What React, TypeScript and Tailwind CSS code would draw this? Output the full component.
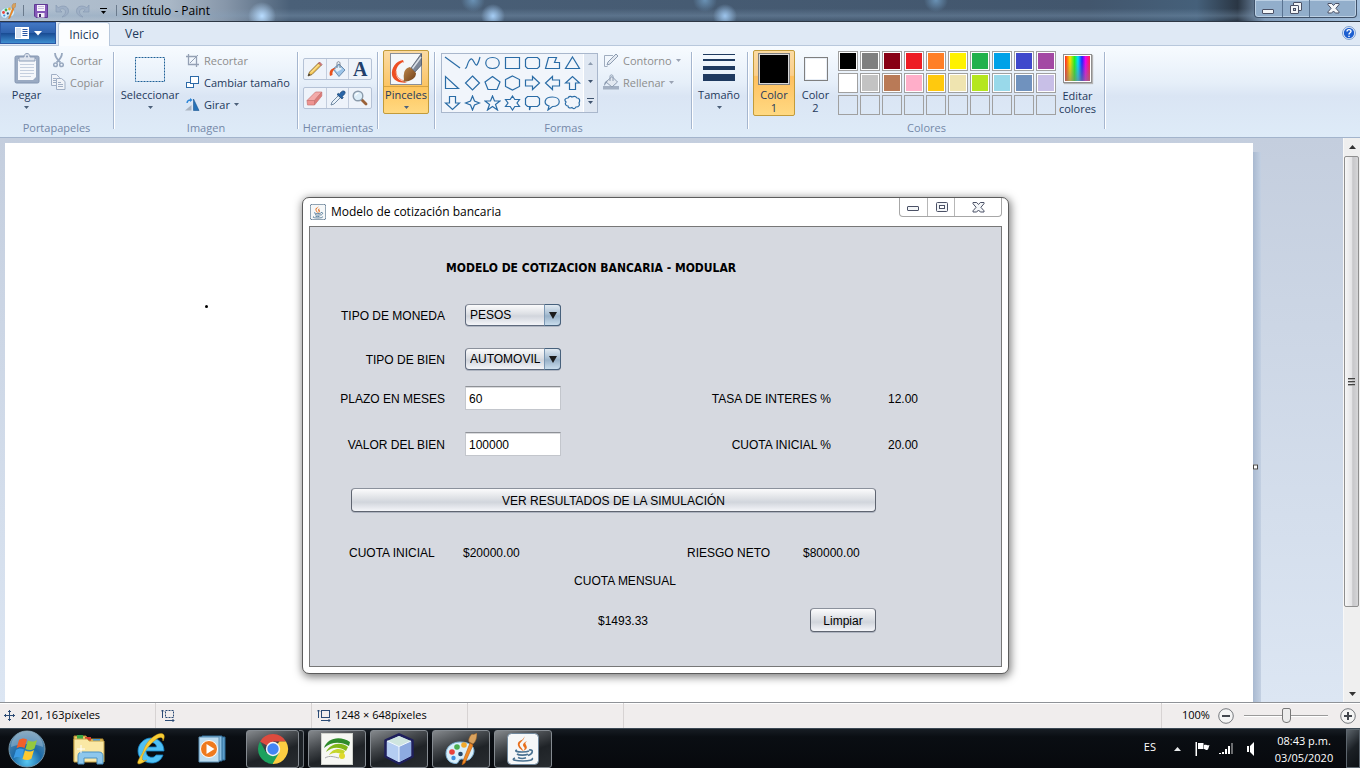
import React, { useState } from "react";

type IconProps = { className?: string };

/* ---------- small shared pieces ---------- */

function Caret({ className = "" }: IconProps) {
  return (
    <svg width="5" height="3" viewBox="0 0 5 3" className={`shrink-0 ${className}`} aria-hidden="true">
      <path d="M0 0h5L2.500 3z" fill="currentColor" />
    </svg>
  );
}

function Separator() {
  return <div className="mt-[6px] h-[77px] w-[2px] shrink-0 border-r border-white bg-[#a5b6cf]" />;
}

function Group({ label, className, children }: { label: string; className: string; children: React.ReactNode }) {
  return (
    <section className={`flex shrink-0 flex-col pt-1 ${className}`}>
      <div className="flex h-[70px] items-start">{children}</div>
      <div className="text-center text-[11px] leading-[16px] text-[#7488a8]">{label}</div>
    </section>
  );
}

function SmallRow({ icon, label, muted, caret }: { icon: React.ReactNode; label: string; muted?: boolean; caret?: boolean }) {
  return (
    <button type="button" className={`flex h-[22px] items-center gap-1 pb-[2px] whitespace-nowrap ${muted ? "text-[#8d8d8d]" : "text-[#1e395b]"}`}>
      <span className="flex w-4 justify-center">{icon}</span>
      {label}
      {caret && <Caret className={muted ? "text-[#9aa3b3]" : "text-[#4c607a]"} />}
    </button>
  );
}

/* ---------- title bar icons ---------- */

function PaletteIcon({ size, className = "" }: { size: number; className?: string }) {
  return (
    <svg width={size} height={size} viewBox="0 0 32 32" className={`shrink-0 ${className}`} aria-hidden="true">
      <path d="M15 9C7 9 1 14 1 20.500c0 6 4 10 10 10 3 0 2-4 5-4.500s5 3 9 0c2-2 4-5 4-8 0-6-6-9-14-9z" fill="#d9effb" stroke="#7fb2d6" />
      <circle cx="7" cy="19" r="2.800" fill="#e8413b" />
      <circle cx="12" cy="14" r="2.800" fill="#4aae4f" />
      <circle cx="19" cy="12" r="2.800" fill="#f2a92c" />
      <circle cx="8.500" cy="25" r="2.200" fill="#3f8fe0" />
      <circle cx="15.500" cy="21" r="2.300" fill="#27486b" />
      <path d="M25 10l3 2-8 18-3 2 1-4z" fill="#f08a24" stroke="#b85c11" strokeWidth=".6" />
      <path d="M24 9c-1-3 1-6 3-8 1 1 3 0 5-1 0 4-1 9-4 11z" fill="#d9a25e" stroke="#94602a" strokeWidth=".6" />
    </svg>
  );
}

function SaveIcon() {
  return (
    <svg width="14" height="14" viewBox="0 0 14 14" aria-hidden="true">
      <path d="M.5.5h13v13H2L.5 12z" fill="#8557b8" stroke="#5f3a93" />
      <path d="M3 1h8v6H3z" fill="#f6f3fb" />
      <path d="M4 2.500h6M4 4.500h6" stroke="#c9bcdf" />
      <path d="M3.500 9h7v4.500h-7z" fill="#f1edf7" />
      <path d="M5 10h2v3H5z" fill="#3c2b63" />
    </svg>
  );
}

function UndoIcon({ flip }: { flip?: boolean }) {
  return (
    <svg width="14" height="14" viewBox="0 0 14 14" className={flip ? "-scale-x-100" : ""} aria-hidden="true">
      <path d="M1 1v7h6L4.800 5.800C7 3.800 10.500 5 10.500 8c0 2-1.500 3.700-3.500 5 4-.8 6.500-3 6.500-6C13.500 2 7.500.5 3.200 3.800z" fill="#9fb0c6" stroke="#8497b0" strokeWidth=".6" />
    </svg>
  );
}

function MinGlyph() {
  return (
    <svg width="13" height="13" viewBox="0 0 13 13" aria-hidden="true">
      <rect x=".5" y="7.500" width="11" height="4" rx=".5" fill="#f4f6f8" stroke="#4b5166" />
    </svg>
  );
}

function MaxGlyph() {
  return (
    <svg width="13" height="11" viewBox="0 0 13 11" aria-hidden="true">
      <rect x="1.500" y=".5" width="11" height="9" rx="1" fill="#f4f6f8" stroke="#4b5166" />
      <rect x="4.500" y="3.500" width="5" height="3" fill="#fff" stroke="#4b5166" />
    </svg>
  );
}

function RestoreGlyph() {
  return (
    <svg width="13" height="13" viewBox="0 0 13 13" aria-hidden="true">
      <rect x="3.500" y=".5" width="8" height="8" rx=".5" fill="#f4f6f8" stroke="#4b5166" />
      <rect x=".5" y="3.500" width="8" height="8" rx=".5" fill="#f4f6f8" stroke="#4b5166" />
      <rect x="3.500" y="6.500" width="2" height="2" fill="#c6d4e3" stroke="#4b5166" />
    </svg>
  );
}

function CloseGlyph() {
  return (
    <svg width="13" height="11" viewBox="0 0 13 11" aria-hidden="true">
      <path d="M1 .5h3.700L6.500 2.500 8.300.5H12v1.200L8.900 5.300 12 8.800V10H8.300L6.500 8 4.700 10H1V8.800l3.100-3.500L1 1.700z" fill="#f4f6f8" stroke="#4b5166" />
    </svg>
  );
}

/* ---------- ribbon icons ---------- */

function ClipboardIcon() {
  return (
    <svg width="26" height="31" viewBox="0 0 26 31" aria-hidden="true">
      <rect x="1" y="3" width="24" height="27" rx="1.500" fill="#9aaac2" stroke="#8496b2" />
      <path d="M4 6h18v18l-3 3H4z" fill="#f5f7fb" />
      <path d="M6 11.500h14M6 14.500h14M6 17.500h14M6 20.500h14M6 23.500h11" stroke="#c5cfdf" />
      <path d="M5 8V4h5c0-2 1-3.500 3-3.500S16 2 16 4h5v4z" fill="#dde3ed" stroke="#8b9cb6" />
      <circle cx="13" cy="3.500" r="1" fill="#8496b2" />
    </svg>
  );
}

function ScissorsIcon() {
  return (
    <svg width="11" height="15" viewBox="0 0 11 15" fill="none" stroke="#98a8bf" aria-hidden="true">
      <path d="M2 0c0 3 1.500 6 5.500 9.500M9 0c0 3-1.500 6-5.500 9.500" strokeWidth="1.800" />
      <circle cx="2.500" cy="11.800" r="1.800" strokeWidth="1.500" />
      <circle cx="8.500" cy="11.800" r="1.800" strokeWidth="1.500" />
    </svg>
  );
}

function CopyIcon() {
  return (
    <svg width="16" height="16" viewBox="0 0 16 16" fill="#f0f3f8" stroke="#a0afc5" aria-hidden="true">
      <path d="M1.500.5h5l3 3v8h-8z" />
      <path d="M3 4.500h3M3 6.500h4M3 8.500h4" />
      <path d="M6.500 4.500h5l3.500 3v8H6.500z" />
      <path d="M8 8.500h3M8 10.500h5M8 12.500h5" />
    </svg>
  );
}

function CropIcon() {
  return (
    <svg width="13" height="13" viewBox="0 0 13 13" fill="none" stroke="#94a0b4" aria-hidden="true">
      <path d="M2.500 0v10.500H13M0 2.500h10.500V13" strokeWidth="1.300" />
      <path d="M4 9L12 1" />
    </svg>
  );
}

function ResizeIcon() {
  return (
    <svg width="13" height="13" viewBox="0 0 13 13" aria-hidden="true">
      <rect x=".5" y="6.500" width="7" height="5" fill="#fff" stroke="#2c6aa8" />
      <rect x="4.500" y=".5" width="8" height="7" fill="#fff" stroke="#2c6aa8" />
    </svg>
  );
}

function RotateIcon() {
  return (
    <svg width="15" height="13" viewBox="0 0 15 13" aria-hidden="true">
      <path d="M0 12.500L6.500 7v5.500z" fill="#a9b3c0" />
      <path d="M8.500 1v11.500H14z" fill="#2672b8" stroke="#1a5691" strokeWidth=".6" />
      <path d="M2 5c.2-2 1.500-3 3.500-3" fill="none" stroke="#2b85d8" strokeWidth="1.300" />
      <path d="M5 0l2.500 2L5 4z" fill="#2b85d8" />
    </svg>
  );
}

function PencilIcon() {
  return (
    <svg width="16" height="16" viewBox="0 0 16 16" aria-hidden="true">
      <path d="M1 15l1.500-4L11.500 2l2.500 2.500-9 9z" fill="#f4c654" stroke="#7b6131" strokeWidth=".8" />
      <path d="M11.500 2l1-1 2.500 2.500-1 1z" fill="#e78383" stroke="#9b4d4d" strokeWidth=".7" />
      <path d="M1 15l.8-2.500 1.800 1.600z" fill="#333" />
      <path d="M4 11.500L12 3.500" stroke="#fff0b8" />
    </svg>
  );
}

function BucketIcon() {
  return (
    <svg width="17" height="16" viewBox="0 0 17 16" aria-hidden="true">
      <path d="M4 8l6-5 6 6-6 6.500z" fill="#9cc4e8" stroke="#54789e" strokeWidth=".8" />
      <path d="M6 8l4-3 3 3-5 3z" fill="#e4f1fb" />
      <path d="M1 15c-1-4 0-8 6-8-3 2-4 4-3.500 7z" fill="#e8521d" />
      <path d="M8 7V2.500C8 0 11 0 11 2.500V7" fill="none" stroke="#7d8795" />
    </svg>
  );
}

function EraserIcon() {
  return (
    <svg width="17" height="15" viewBox="0 0 17 15" aria-hidden="true">
      <path d="M1 9.500L9.500 1h6.300L8.500 9.500z" fill="#f3aaa9" stroke="#c97573" strokeWidth=".7" />
      <path d="M1 9.500h7.500V14H1.500z" fill="#ee9390" stroke="#c97573" strokeWidth=".7" />
      <path d="M8.500 9.500L15.800 1v4L8.500 14z" fill="#dd7b78" stroke="#c97573" strokeWidth=".7" />
    </svg>
  );
}

function DropperIcon() {
  return (
    <svg width="16" height="16" viewBox="0 0 16 16" aria-hidden="true">
      <path d="M1 15l1-3 6.500-6.500 2 2L4 14z" fill="#eaf3fa" stroke="#67809b" strokeWidth=".9" />
      <path d="M7 4.500l1.300-1.200 1 1C10.500 2.500 12 .5 14 1c2 .8 1.400 3-1.800 5.500l1 1L12 9z" fill="#2a66a8" stroke="#17406f" strokeWidth=".7" />
    </svg>
  );
}

function MagnifierIcon() {
  return (
    <svg width="16" height="16" viewBox="0 0 16 16" aria-hidden="true">
      <path d="M9.500 9.500l4.500 4.500" stroke="#9a6238" strokeWidth="2.800" strokeLinecap="round" />
      <circle cx="6" cy="6" r="4.800" fill="#dcedf8" stroke="#8b9bab" strokeWidth="1.400" />
      <path d="M3.500 5.500C4 3.800 5.200 3.200 6.500 3.200" stroke="#fff" fill="none" strokeWidth="1.200" />
    </svg>
  );
}

function BrushesIcon() {
  return (
    <svg width="32" height="32" viewBox="0 0 32 32" aria-hidden="true">
      <defs>
        <linearGradient id="bristle" x1="0" y1="0" x2="1" y2="1">
          <stop offset="0" stopColor="#c08a4e" />
          <stop offset="1" stopColor="#6d3e17" />
        </linearGradient>
      </defs>
      <rect x=".5" y=".5" width="31" height="31" fill="#f3f7fa" stroke="#8a9098" />
      <path d="M13 7C6 8 1 15 2 22c1 6 9 8.500 15 7.500-6-1-11-4-11-9.500 0-6 3-9 7-11l1 1z" fill="#ee4f23" />
      <path d="M6 18c0 6 4 9 9 10" fill="none" stroke="#f98e6b" />
      <path d="M21 15L31 1h.5v11L25 19z" fill="#7c8798" stroke="#475061" strokeWidth=".7" />
      <path d="M22.500 15.500L31 4" stroke="#dbe2ea" strokeWidth="1.500" />
      <path d="M20 14l6 6c0 5-4 8-13 9 2-2 0-5 1-8 0-3 2-6 6-7z" fill="url(#bristle)" />
    </svg>
  );
}

function OutlineIcon() {
  return (
    <svg width="16" height="15" viewBox="0 0 16 15" aria-hidden="true">
      <path d="M10 2.500H1.500v11h3" fill="none" stroke="#a0adbf" />
      <path d="M4 12l1-3 8-8 2 2-8 8z" fill="#e3e9f1" stroke="#8d9cb1" />
    </svg>
  );
}

function FillIcon() {
  return (
    <svg width="16" height="16" viewBox="0 0 16 16" aria-hidden="true">
      <path d="M0 12h16v3.500H0z" fill="#a3b0c3" />
      <path d="M3 8l6-5.500L14.500 8 9 13z" fill="#e3e9f1" stroke="#8d9cb1" />
      <path d="M7 7V2.500C7 .3 10 .3 10 2.500V7" fill="none" stroke="#8d9cb1" />
      <path d="M1 12c0-3 1-5 4-6L3.500 9z" fill="#8d9cb1" />
    </svg>
  );
}

const shapePaths: string[] = [
  "M1 2l15 11",
  "M1 13C3 14 3 9 5 6s3-3 5 1 3 6 6-5",
  "M8.500 2.500c9 0 9 11 0 11s-9-11 0-11z",
  "M1.500 2.500h14v11h-14z",
  "M3.500 2.500h10l2 2v7l-2 2h-10l-2-2v-7z",
  "M4.500 2.500h8l-2 5h5v6h-14z",
  "M8.500 2L15.500 13.500h-14z",
  "M1.500 1.500v12h13z",
  "M8.500 1L15.500 8l-7 7-7-7z",
  "M8.500 1.500l7.500 5.500-3 7.500H4L1 7z",
  "M8.500 1l7 3.500v7l-7 3.500-7-3.500v-7z",
  "M1.500 5v6h7v3.500L15.500 8l-7-6.500V5z",
  "M15.500 5v6h-7v3.500L1.500 8l7-6.500V5z",
  "M5.500 14.500h6V8h4L8.500 1.500 1.500 8h4z",
  "M5.500 1.500h6V8h4l-7 6.500L1.500 8h4z",
  "M8.500 1l2 5 5 2-5 2-2 5-2-5-5-2 5-2z",
  "M8.500 1l2 5h5.500l-4.500 3.500 2 5.500-5-3.500-5 3.500 2-5.500L1 6h5.500z",
  "M8.500 1l2.300 3.500H15.500L13 8l2.500 3.500h-4.700L8.500 15l-2.300-3.500H1.500L4 8 1.500 4.500h4.700z",
  "M3.500 1.500h10l2 2v6l-2 2h-7L5.500 15v-3.500h-2l-2-2v-6z",
  "M8.500 2c9 0 9 9.500 0 9.500L4 15l1-4C-1 9 0 2 8.500 2z",
  "M4 3c1-2 3-2 4-1 2-1 4-.5 5 1 3 0 3 3 2 5 1 2 0 4-3 4-1 2-3 2-4 .5-2 1-4 .5-4-1.500-3 0-3-3-2-4-2-2-1-4 2-4z",
];

function ShapeGallery() {
  return (
    <div className="flex h-[60px] w-[157px] border border-[#a9b7cc] bg-[#f1f5fb]">
      <div className="grid flex-1 grid-cols-7 content-between">
        {shapePaths.map((d, i) => (
          <button key={i} type="button" aria-label={`Forma ${i + 1}`} className="flex h-[18px] items-center justify-center">
            <svg width="17" height="16" viewBox="0 0 17 16" fill="none" stroke="#2a6ca6" strokeWidth="1.200" aria-hidden="true">
              <path d={d} />
            </svg>
          </button>
        ))}
      </div>
      <div className="flex w-[14px] flex-col items-center justify-around border-l border-white bg-[#dfe7f2] text-[#3f546f]">
        <Caret className="rotate-180 opacity-50" />
        <Caret />
        <span className="flex flex-col items-center gap-[2px]">
          <span className="h-px w-[7px] bg-[#3f546f]" />
          <Caret />
        </span>
      </div>
    </div>
  );
}

const palette: (string | null)[] = [
  "#000000", "#7f7f7f", "#880015", "#ed1c24", "#ff7f27", "#fff200", "#22b14c", "#00a2e8", "#3f48cc", "#a349a4",
  "#ffffff", "#c3c3c3", "#b97a57", "#ffaec9", "#ffc90e", "#efe4b0", "#b5e61d", "#99d9ea", "#7092be", "#c8bfe7",
  null, null, null, null, null, null, null, null, null, null,
];

/* ---------- Paint chrome ---------- */

function TitleBar() {
  return (
    <header
      className="flex h-[22px] shrink-0 items-start border-b border-[#2d3744] bg-[radial-gradient(circle_at_262px_16px,#b8dcff_0,transparent_14px),radial-gradient(circle_at_493px_16px,#a5cdf5_0,transparent_12px),radial-gradient(circle_at_725px_16px,#9cc4ec_0,transparent_12px),radial-gradient(circle_at_473px_0px,#6a92b5_0,transparent_12px),radial-gradient(circle_at_705px_0px,#6a92b5_0,transparent_12px),radial-gradient(circle_at_936px_0px,#6a92b5_0,transparent_12px),linear-gradient(to_bottom,transparent_40%,#86a2bd55_75%,transparent),linear-gradient(to_right,#b4c3d3_0,#a9b7c6_170px,#8797aa_225px,#4a6078_290px,#42566d_80%,#45607a_88%,#2a3644_91%,#7f9ab8_93%,#a3bfdd_100%)]"
    >
      <div className="flex h-[21px] flex-1 items-center">
        <PaletteIcon size={16} />
        <span className="ml-[7px] h-[11px] w-px bg-[#6a7a8c]" />
        <div className="ml-[10px] flex items-center gap-[7px]">
          <button type="button" aria-label="Guardar"><SaveIcon /></button>
          <button type="button" aria-label="Deshacer"><UndoIcon /></button>
          <button type="button" aria-label="Rehacer"><UndoIcon flip /></button>
          <button type="button" aria-label="Personalizar" className="flex flex-col items-center gap-[2px] pl-[3px] text-black">
            <span className="h-px w-[7px] bg-black" />
            <Caret />
          </button>
        </div>
        <span className="ml-[9px] h-[11px] w-px bg-[#6a7a8c]" />
        <h1 className="ml-[5px] text-[12px] text-black">Sin título - Paint</h1>
      </div>
      <div className="mr-[3px] flex h-[18px] rounded-b-[4px] border border-t-0 border-[#3f5169] bg-[#92aecb] shadow-[inset_0_0_0_1px_#bcd0e4]">
        <button type="button" aria-label="Minimizar" className="flex w-[28px] items-center justify-center border-r border-[#5a7391]"><MinGlyph /></button>
        <button type="button" aria-label="Restaurar" className="flex w-[27px] items-center justify-center border-r border-[#5a7391]"><RestoreGlyph /></button>
        <button type="button" aria-label="Cerrar" className="flex w-[46px] items-center justify-center"><CloseGlyph /></button>
      </div>
    </header>
  );
}

function TabRow() {
  return (
    <nav className="flex h-6 shrink-0 items-end border-b border-[#b8c8dc] bg-[#dfe9f5] text-[12px] text-[#1e395b]">
      <button
        type="button"
        aria-label="Menú de Paint"
        className="mb-px flex h-[22px] w-14 items-center justify-center gap-[5px] border border-[#2b58a4] bg-[linear-gradient(#4378c4,#2f62ae_48%,#184a92_50%,#3f8fd0)] text-white"
      >
        <svg width="14" height="12" viewBox="0 0 14 12" aria-hidden="true">
          <rect width="14" height="12" fill="#fff" />
          <rect x="1" y="1" width="5" height="10" fill="#d6e2f1" />
          <path d="M7.500 2.500h5M7.500 4.500h5M7.500 6.500h5M7.500 8.500h5" stroke="#2b58a4" />
        </svg>
        <svg width="8" height="5" viewBox="0 0 8 5" aria-hidden="true"><path d="M0 0h8L4 4.500z" fill="#fff" /></svg>
      </button>
      <button type="button" className="-mb-px ml-[2px] h-[24px] w-[52px] rounded-t-[3px] border border-b-0 border-[#b8c8dc] bg-[#fbfdff]">Inicio</button>
      <button type="button" className="h-[22px] w-[49px]">Ver</button>
      <button type="button" aria-label="Ayuda" className="mr-1 mb-[5px] ml-auto">
        <svg width="14" height="14" viewBox="0 0 14 14" aria-hidden="true">
          <circle cx="7" cy="7" r="6.400" fill="#fff" stroke="#6b93cc" />
          <circle cx="7" cy="7" r="5.200" fill="#1d5fd0" />
          <path d="M5 5.500C5 3 9 3 9 5.300 9 6.800 7 6.700 7 8.500M7 9.700v1.400" fill="none" stroke="#fff" strokeWidth="1.400" />
        </svg>
      </button>
    </nav>
  );
}

function Ribbon() {
  return (
    <div className="flex h-[92px] shrink-0 overflow-hidden border-b border-[#a3b4cc] bg-[linear-gradient(#f7fbff,#e6eff9_40%,#dae5f4_55%,#deebf8)] text-[11px] leading-[13px] text-[#1e395b]">
      <Group label="Portapapeles" className="w-[113px]">
        <button type="button" className="flex w-[53px] flex-col items-center pt-[3px]">
          <ClipboardIcon />
          <span className="pt-[4px]">Pegar</span>
          <Caret className="mt-[5px] text-[#4c607a]" />
        </button>
        <div className="-ml-[3px] flex flex-col">
          <SmallRow muted icon={<ScissorsIcon />} label="Cortar" />
          <SmallRow muted icon={<CopyIcon />} label="Copiar" />
        </div>
      </Group>
      <Separator />
      <Group label="Imagen" className="w-[182px]">
        <button type="button" className="flex w-[70px] flex-col items-center pt-[7px]">
          <svg width="32" height="26" viewBox="0 0 32 26" aria-hidden="true">
            <rect x="1.500" y=".5" width="29" height="24" fill="none" stroke="#1f6096" strokeDasharray="2 1" />
          </svg>
          <span className="pt-[5px]">Seleccionar</span>
          <Caret className="mt-[5px] text-[#4c607a]" />
        </button>
        <div className="-ml-px flex flex-col">
          <SmallRow muted icon={<CropIcon />} label="Recortar" />
          <SmallRow icon={<ResizeIcon />} label="Cambiar tamaño" />
          <SmallRow caret icon={<RotateIcon />} label="Girar" />
        </div>
      </Group>
      <Separator />
      <Group label="Herramientas" className="w-[78px]">
        <div className="flex flex-col gap-[7px] pt-2 pl-1">
          <div className="flex h-[22px] w-[69px] divide-x divide-[#c3cddd] rounded-[2px] border border-[#b5c2d6] bg-[#eef3fa]">
            <button type="button" aria-label="Lápiz" className="flex flex-1 items-center justify-center"><PencilIcon /></button>
            <button type="button" aria-label="Relleno" className="flex flex-1 items-center justify-center"><BucketIcon /></button>
            <button type="button" aria-label="Texto" className="flex flex-1 items-center justify-center font-['Liberation_Serif',serif] text-[20px] font-bold text-[#22406b]">A</button>
          </div>
          <div className="flex h-[22px] w-[69px] divide-x divide-[#c3cddd] rounded-[2px] border border-[#b5c2d6] bg-[#eef3fa]">
            <button type="button" aria-label="Borrador" className="flex flex-1 items-center justify-center"><EraserIcon /></button>
            <button type="button" aria-label="Selector de color" className="flex flex-1 items-center justify-center"><DropperIcon /></button>
            <button type="button" aria-label="Lupa" className="flex flex-1 items-center justify-center"><MagnifierIcon /></button>
          </div>
        </div>
      </Group>
      <Separator />
      <div className="w-[55px] shrink-0 pt-1 pl-1">
        <button
          type="button"
          className="flex h-[64px] w-[46px] flex-col items-center rounded-[2px] border border-[#c29b3b] bg-[linear-gradient(#fbdba4,#fbc566_55%,#fec55d_56%,#ffd982)] pt-[2px]"
        >
          <BrushesIcon />
          <span className="mt-px w-full border-t border-[#d9a441] pt-px">Pinceles</span>
          <Caret className="mt-[5px] text-[#4c607a]" />
        </button>
      </div>
      <Separator />
      <Group label="Formas" className="w-[255px]">
        <div className="pt-[3px] pl-[5px]"><ShapeGallery /></div>
        <div className="flex flex-col pl-[5px]">
          <SmallRow muted caret icon={<OutlineIcon />} label="Contorno" />
          <SmallRow muted caret icon={<FillIcon />} label="Rellenar" />
        </div>
      </Group>
      <Separator />
      <div className="w-[54px] shrink-0 pt-2">
        <button type="button" className="flex w-[52px] flex-col items-center">
          <svg width="32" height="28" viewBox="0 0 32 28" fill="#1f3a60" aria-hidden="true">
            <path d="M0 0h32v1H0zM0 5h32v2H0zM0 12h32v4H0zM0 20h32v7H0z" />
          </svg>
          <span className="pt-[6px]">Tamaño</span>
          <Caret className="mt-[5px] text-[#4c607a]" />
        </button>
      </div>
      <Separator />
      <Group label="Colores" className="w-[355px]">
        <button
          type="button"
          className="ml-1 flex h-[66px] w-[42px] flex-col items-center rounded-[2px] border border-[#c29b3b] bg-[linear-gradient(#fbdba4,#fbcf8c_38%,#fec060_40%,#ffd982)] pt-[2px]"
        >
          <span className="mb-[3px] size-8 border border-[#7f7f7f] bg-black shadow-[inset_0_0_0_1px_#d8d8d8]" />
          <span>Color<br />1</span>
        </button>
        <button type="button" className="flex h-[66px] w-[41px] flex-col items-center pt-[7px]">
          <span className="mb-[7px] size-6 border border-[#7f7f7f] bg-white shadow-[inset_0_0_0_1px_#e8eef6]" />
          <span>Color<br />2</span>
        </button>
        <div className="grid grid-cols-10 gap-[2px] pt-px pl-[2px]">
          {palette.map((c, i) => (
            <button
              key={i}
              type="button"
              aria-label={`Color de paleta ${i + 1}`}
              className={`size-5 border border-[#a0a0a0] p-px ${c ? "bg-white" : "bg-transparent"}`}
            >
              <span className="block size-full" style={{ backgroundColor: c ?? "transparent" }} />
            </button>
          ))}
        </div>
        <button type="button" className="flex w-[43px] flex-col items-center pt-1">
          <span className="mb-[6px] block size-[29px] border border-[#8f8f8f] bg-white p-px shadow-[1px_1px_1px_#b5b5b5]">
            <span className="block size-full bg-[linear-gradient(to_bottom,transparent_20%,#80808099),linear-gradient(to_right,#f22,#fd0_20%,#2e2_38%,#0df_52%,#22f_68%,#e0e_82%,#f24)]" />
          </span>
          <span>Editar<br />colores</span>
        </button>
      </Group>
      <Separator />
    </div>
  );
}

function ScrollBar() {
  return (
    <div className="flex w-[17px] shrink-0 flex-col items-start border-l border-[#f8f8f8] bg-[#efefef]">
      <button type="button" aria-label="Subir" className="flex h-[18px] w-full shrink-0 items-center justify-center">
        <svg width="7" height="4" viewBox="0 0 7 4" aria-hidden="true"><path d="M0 4h7L3.500 0z" fill="#333" /></svg>
      </button>
      <div className="flex w-[15px] grow-[451] basis-0 flex-col items-center justify-center gap-px rounded-[2px] border border-[#8f8f8f] bg-[linear-gradient(to_right,#f7f7f7,#e4e4e6_50%,#c7c7ca_60%,#d6d6d8)]">
        <span className="h-[2px] w-[7px] border-t border-[#444] bg-[#aaa]" />
        <span className="h-[2px] w-[7px] border-t border-[#444] bg-[#aaa]" />
        <span className="h-[2px] w-[7px] border-t border-[#444] bg-[#aaa]" />
      </div>
      <div className="grow-[78] basis-0" />
      <button type="button" aria-label="Bajar" className="flex h-[17px] w-full shrink-0 items-center justify-center">
        <svg width="7" height="4" viewBox="0 0 7 4" aria-hidden="true"><path d="M0 0h7L3.500 4z" fill="#333" /></svg>
      </button>
    </div>
  );
}

function MoveIcon() {
  return (
    <svg width="11" height="11" viewBox="0 0 11 11" fill="none" stroke="#2a4a75" aria-hidden="true">
      <path d="M5.500 0v11M0 5.500h11M4 2l1.500-1.500L7 2M4 9l1.500 1.500L7 9M2 4L.5 5.500 2 7M9 4l1.500 1.500L9 7" />
    </svg>
  );
}

function SizeIcon({ dashed }: { dashed?: boolean }) {
  return (
    <svg width="14" height="13" viewBox="0 0 14 13" fill="none" stroke="#2a4a75" aria-hidden="true">
      <rect x="4.500" y="1.500" width="8" height="7" strokeDasharray={dashed ? "2 1" : undefined} />
      <path d="M1.500 1v8M0 2.500L1.500 1 3 2.500M4 11.500h9M11.500 10l1.500 1.500-1.500 1.500" />
    </svg>
  );
}

function StatusBar() {
  return (
    <footer className="flex h-[26px] shrink-0 items-stretch border-t border-[#8f9297] bg-[#f0eded] text-[11px] text-black shadow-[inset_0_1px_0_#fff]">
      <div className="flex w-[156px] items-center gap-[6px] border-r border-[#d7d3d3] pl-1"><MoveIcon />201, 163píxeles</div>
      <div className="flex w-[156px] items-center border-r border-[#d7d3d3] pl-[5px]"><SizeIcon dashed /></div>
      <div className="flex w-[156px] items-center gap-1 border-r border-[#d7d3d3] pl-[5px]"><SizeIcon />1248 × 648píxeles</div>
      <div className="w-[156px] border-r border-[#d7d3d3]" />
      <div className="ml-auto flex items-center border-l border-[#d7d3d3] pr-[4px] pl-5">
        <span className="w-9">100%</span>
        <button type="button" aria-label="Alejar">
          <svg width="16" height="16" viewBox="0 0 16 16" aria-hidden="true">
            <circle cx="8" cy="8" r="7.300" fill="#f4f4f4" stroke="#76797e" />
            <path d="M4 8h8" stroke="#43474e" strokeWidth="2" />
          </svg>
        </button>
        <input
          type="range"
          aria-label="Zoom"
          defaultValue={50}
          className="mr-3 ml-[10px] h-4 w-[84px] appearance-none bg-transparent [&::-webkit-slider-runnable-track]:h-[2px] [&::-webkit-slider-runnable-track]:border-t [&::-webkit-slider-runnable-track]:border-[#9a9a9a] [&::-webkit-slider-runnable-track]:bg-white [&::-webkit-slider-thumb]:-mt-2 [&::-webkit-slider-thumb]:h-[15px] [&::-webkit-slider-thumb]:w-[9px] [&::-webkit-slider-thumb]:appearance-none [&::-webkit-slider-thumb]:rounded-t-[2px] [&::-webkit-slider-thumb]:rounded-b-[4px] [&::-webkit-slider-thumb]:border [&::-webkit-slider-thumb]:border-[#777] [&::-webkit-slider-thumb]:bg-[#ececec]"
        />
        <button type="button" aria-label="Acercar">
          <svg width="16" height="16" viewBox="0 0 16 16" aria-hidden="true">
            <circle cx="8" cy="8" r="7.300" fill="#f4f4f4" stroke="#76797e" />
            <path d="M4 8h8M8 4v8" stroke="#43474e" strokeWidth="2" />
          </svg>
        </button>
      </div>
    </footer>
  );
}

/* ---------- Java dialog ---------- */

function JavaIcon({ size }: { size: number }) {
  return (
    <svg width={size} height={size} viewBox="0 0 32 32" className="shrink-0" aria-hidden="true">
      <rect x=".5" y=".5" width="31" height="31" rx="4" fill="#f5f7f8" stroke="#6f879c" strokeWidth={size < 20 ? 2 : 1} />
      <path d="M17 3c2 4-6 6-4 10 1 2 3 3 3 5-3-2-6-5-5-8S18 7 17 3z" fill="#e76f1c" />
      <path d="M20 8c-4 2-5 4-3 6 1 1 1 2-1 4 5-2 4-4 3-6s-1-2 1-4z" fill="#e76f1c" />
      <g fill="none" stroke="#4a7291" strokeWidth="1.700">
        <path d="M10 17c-3 1 0 2 5 2s7-1 7-1M10 21c2 1.500 8 1.500 11 .3M11 24.500c2 1 6 1 8 .3M22 17c5-1 4 4-1 5.500" />
        <path d="M8 25c-5 2 2 3 8 3s11-1 9-3" />
      </g>
    </svg>
  );
}

function ComboBox({ id, options }: { id: string; options: string[] }) {
  return (
    <div className="relative mt-px h-[22px] w-24">
      <select
        id={id}
        className="block size-full appearance-none rounded-[4px] border border-[#5f6a7d] border-t-[#8b919c] bg-[linear-gradient(#fbfbfc,#dcdfe4_45%,#d1d5dc_55%,#f4f5f9)] pb-px pl-1 leading-[18px] text-black shadow-[0_1px_0_#aeb4c0]"
      >
        {options.map((o) => (
          <option key={o}>{o}</option>
        ))}
      </select>
      <span className="pointer-events-none absolute inset-y-0 right-0 flex w-[17px] items-center justify-center rounded-r-[4px] border border-[#47617c] border-l-[#7b97b3] bg-[linear-gradient(#e1eaf2,#a9bfd3_45%,#98b1c8_55%,#c9dded)]">
        <svg width="8" height="7" viewBox="0 0 8 7" aria-hidden="true"><path d="M0 0h8L4 7z" fill="#1c1c1c" /></svg>
      </span>
    </div>
  );
}

const swingButton =
  "h-6 rounded-[4px] border border-[#5f6571] border-t-[#8b919c] bg-[linear-gradient(#fbfbfc,#dcdfe4_45%,#d1d5dc_60%,#f4f5f9)] pt-[2px] leading-5 text-black shadow-[0_1px_0_#aeb4c0]";
const swingField = "h-6 w-24 border border-[#c3c6cc] border-t-[#8d9096] bg-white pt-[2px] pl-[3px] text-black shadow-[inset_0_1px_0_#d9dadd]";
const formRow = "grid h-6 grid-cols-[135px_96px_1fr_67px] gap-x-5 leading-[26px]";

function QuoteDialog() {
  const [months, setMonths] = useState("60");
  const [value, setValue] = useState("100000");
  return (
    <section
      aria-label="Modelo de cotización bancaria"
      className="absolute top-[54px] left-[297px] flex w-[707px] flex-col rounded-[7px] border border-[#5c5c5c] bg-white px-[6px] pb-[6px] shadow-[1px_2px_9px_1px_#00000080]"
    >
      <header className="flex h-[28px] items-start">
        <div className="flex flex-1 items-center gap-[5px] pt-[6px] pl-px">
          <JavaIcon size={16} />
          <h2 className="text-[12px] leading-[16px] text-black">Modelo de cotización bancaria</h2>
        </div>
        <div className="flex h-[19px] rounded-b-[4px] border border-t-0 border-[#a7a7a7]">
          <button type="button" aria-label="Minimizar diálogo" className="flex w-7 justify-center border-r border-[#b7b7b7] pt-px"><MinGlyph /></button>
          <button type="button" aria-label="Maximizar diálogo" className="flex w-[27px] items-center justify-center border-r border-[#b7b7b7]"><MaxGlyph /></button>
          <button type="button" aria-label="Cerrar diálogo" className="flex w-[46px] items-center justify-center"><CloseGlyph /></button>
        </div>
      </header>
      <form
        onSubmit={(e) => e.preventDefault()}
        className="flex flex-col border border-[#777] bg-[#d6d9e0] pt-[29px] pr-[83px] pb-[34px] font-['Liberation_Sans',sans-serif] text-[12px] leading-6 text-black"
      >
        <h3 className="pl-[136px] font-['DejaVu_Sans_Condensed','Open_Sans',sans-serif] font-bold">MODELO DE COTIZACION BANCARIA - MODULAR</h3>
        <div className={`mt-[23px] ${formRow}`}>
          <label htmlFor="moneda" className="text-right">TIPO DE MONEDA</label>
          <ComboBox id="moneda" options={["PESOS", "DOLARES"]} />
        </div>
        <div className={`mt-5 ${formRow}`}>
          <label htmlFor="bien" className="text-right">TIPO DE BIEN</label>
          <ComboBox id="bien" options={["AUTOMOVIL", "CASA"]} />
        </div>
        <div className={`mt-[15px] ${formRow}`}>
          <label htmlFor="plazo" className="text-right">PLAZO EN MESES</label>
          <input id="plazo" value={months} onChange={(e) => setMonths(e.target.value)} className={swingField} />
          <span className="text-right">TASA DE INTERES %</span>
          <output className="text-right">12.00</output>
        </div>
        <div className={`mt-[22px] ${formRow}`}>
          <label htmlFor="valor" className="text-right">VALOR DEL BIEN</label>
          <input id="valor" value={value} onChange={(e) => setValue(e.target.value)} className={swingField} />
          <span className="text-right">CUOTA INICIAL %</span>
          <output className="text-right">20.00</output>
        </div>
        <button type="submit" className={`mt-8 mr-[42px] ml-[41px] ${swingButton}`}>VER RESULTADOS DE LA SIMULACIÓN</button>
        <div className="mt-7 grid h-6 grid-cols-[114px_1fr_116px_115px] pl-[39px] leading-[26px]">
          <span>CUOTA INICIAL</span>
          <output>$20000.00</output>
          <span>RIESGO NETO</span>
          <output>$80000.00</output>
        </div>
        <div className="mt-1 h-6 pr-[42px] pl-[64px] text-center leading-[26px]">CUOTA MENSUAL</div>
        <div className="mt-4 grid h-6 grid-cols-[1fr_66px] pr-[42px] pl-[126px] leading-[26px]">
          <output className="text-center">$1493.33</output>
          <button type="button" className={swingButton}>Limpiar</button>
        </div>
      </form>
    </section>
  );
}

/* ---------- taskbar ---------- */

function StartOrb() {
  return (
    <svg width="38" height="38" viewBox="0 0 38 38" aria-hidden="true">
      <defs>
        <radialGradient id="orb" cx=".5" cy=".85" r=".9">
          <stop offset="0" stopColor="#59c8f2" />
          <stop offset=".45" stopColor="#1d6ba8" />
          <stop offset="1" stopColor="#6d93ae" />
        </radialGradient>
      </defs>
      <circle cx="19" cy="19" r="18" fill="url(#orb)" stroke="#7597ab" />
      <path d="M3 17a16 16 0 0132 0c-9-4-22-4-32 0z" fill="#fff" opacity=".25" />
      <path d="M11 10c3-2 5-2 8-.5L16.500 18c-3-1.500-5-1.500-8 .3z" fill="#f0602a" />
      <path d="M20 10.500c3 1.500 6 1.500 9-.5L26.500 18.500c-3 2-6 2-9 .5z" fill="#95c83e" />
      <path d="M8 20c3-2 5-2 8-.5L13.500 28c-3-1.500-5-1.500-8 .3z" fill="#3b9be4" />
      <path d="M17 20.500c3 1.500 6 1.500 9-.5L23.500 28.500c-3 2-6 2-9 .5z" fill="#fcc92f" />
    </svg>
  );
}

function ExplorerIcon() {
  return (
    <svg width="34" height="32" viewBox="0 0 34 32" aria-hidden="true">
      <path d="M2 3h12l2 3h15v22H2z" fill="#e9c766" stroke="#b18c2f" />
      <path d="M5 2h6v5H5z" fill="#3aa545" /><path d="M13 4h6v5h-6z" fill="#d43f2c" /><path d="M21 6h7v4h-7z" fill="#4797d6" />
      <path d="M2 6h13l2 2h15v21H2z" fill="#fae8a5" stroke="#c6a449" />
      <path d="M6 31v-8c0-3 2-4 4-4h17c3 0 4 2 4 4v8h-6v-6H12v6z" fill="#8dc7ec" stroke="#4b91c2" />
      <path d="M9 12v8M5 16h8" stroke="#fff" />
    </svg>
  );
}

function IeIcon() {
  return (
    <svg width="32" height="32" viewBox="0 0 32 32" aria-hidden="true">
      <path d="M29 18H11c0 7 8 8 10 4h7c-2 6-7 8-11 8C9 30 3 25 3 18S9 5 16 5s13 5 13 13zM11 14h10.500c0-6-10.500-6-10.500 0z" fill="#4fc0f4" stroke="#1584c8" strokeWidth=".8" />
      <path d="M7 21C-1 33 3 33 12 27 4 30 7 21 14 13S28 1 28 8c4-8-2-10-10-4S9 17 7 21z" fill="#f8cd35" stroke="#c99512" strokeWidth=".5" />
    </svg>
  );
}

function MediaIcon() {
  return (
    <svg width="28" height="28" viewBox="0 0 28 28" aria-hidden="true">
      <path d="M8 2h19v23H8z" fill="#5d9dc9" stroke="#2f6c99" />
      <path d="M4 1h20v25H4z" fill="#8dc1e3" stroke="#2f6c99" />
      <path d="M1 2h20v25H1z" fill="#bcdcf0" stroke="#5b8eb3" />
      <circle cx="11" cy="14" r="8.500" fill="#ef7a1e" stroke="#fff" />
      <path d="M8.500 9v10l8-5z" fill="#fff" />
    </svg>
  );
}

function ChromeIcon() {
  return (
    <svg width="32" height="32" viewBox="0 0 32 32" aria-hidden="true">
      <path d="M16 16L3 8.500A15 15 0 0129 8.500H16z" fill="#dd4b3e" />
      <path d="M16 16l6.500-7.500H29A15 15 0 0115.500 31z" fill="#fccd41" />
      <path d="M16 16l6 4-6.500 11A15 15 0 013 8.500L9.500 20z" fill="#1ca15e" />
      <circle cx="16" cy="16" r="7.200" fill="#f4f4f4" />
      <circle cx="16" cy="16" r="5.700" fill="#4285f4" />
    </svg>
  );
}

function SignalIcon() {
  return (
    <svg width="32" height="32" viewBox="0 0 32 32" aria-hidden="true">
      <rect x=".5" y=".5" width="31" height="31" fill="#f6f7f3" stroke="#d0d2cc" />
      <path d="M3 15C6 5 19 2 29 9l-1 4C19 8 10 9 3 15z" fill="#2e8b2b" />
      <path d="M5 19c4-8 14-11 22-5l-2 4c-7-5-14-4-20 1z" fill="#80b719" />
      <path d="M8 22c3-6 10-8 16-4l-2 4c-5-3-9-3-14 0z" fill="#c5d62a" />
      <path d="M4 25c5-3 9-1 14 0" fill="none" stroke="#aaa" />
      <circle cx="21" cy="23" r="3" fill="#e0d92d" />
    </svg>
  );
}

function CubeIcon() {
  return (
    <svg width="32" height="32" viewBox="0 0 32 32" aria-hidden="true">
      <path d="M16 1.500l13.500 6v16L16 30.500l-13.500-7v-16z" fill="#b9d1ee" stroke="#1e1f5c" strokeWidth="2.500" strokeLinejoin="round" />
      <path d="M16 3l12 5-12 5.500L4 8z" fill="#cfe5df" />
      <path d="M4 8l12 5.500V29L4 23z" fill="#b4cdf2" />
      <path d="M28 8l-12 5.500V29l12-6z" fill="#8daae0" />
      <path d="M4 8l12 5.500L28 8M16 13.500V29" fill="none" stroke="#f2f8ff" />
    </svg>
  );
}

function TaskButton({ label, className, children }: { label: string; className: string; children: React.ReactNode }) {
  return (
    <button
      type="button"
      aria-label={label}
      className={`flex h-[38px] items-center justify-center rounded-[3px] border border-[#858b91] bg-[linear-gradient(160deg,#85898d,#45494d_35%,#1f2327_60%,#282c30)] ${className}`}
    >
      {children}
    </button>
  );
}

function Taskbar() {
  return (
    <div className="flex h-10 shrink-0 items-center border-t border-[#3a4854] bg-[linear-gradient(#171d24,#0a0e13_20%,#07090d)]">
      <button type="button" aria-label="Inicio de Windows" className="ml-2"><StartOrb /></button>
      <button type="button" aria-label="Explorador" className="ml-[26px]"><ExplorerIcon /></button>
      <button type="button" aria-label="Internet Explorer" className="ml-[29px]"><IeIcon /></button>
      <button type="button" aria-label="Reproductor multimedia" className="ml-[31px]"><MediaIcon /></button>
      <div className="ml-5 flex">
        <TaskButton label="Chrome" className="w-[53px]"><ChromeIcon /></TaskButton>
        <span className="h-[38px] w-[5px] rounded-r-[3px] border border-l-0 border-[#6b7177] bg-[#1b2025]" />
      </div>
      <div className="ml-1 flex gap-1">
        <TaskButton label="Conexión" className="w-[58px]"><SignalIcon /></TaskButton>
        <TaskButton label="NetBeans" className="w-[58px]"><CubeIcon /></TaskButton>
        <TaskButton label="Paint" className="w-[58px]"><PaletteIcon size={32} /></TaskButton>
        <TaskButton label="Java" className="w-[58px]"><JavaIcon size={32} /></TaskButton>
      </div>
      <div className="ml-auto flex h-full items-center text-[11px] leading-[17px] text-white">
        <span className="pb-1">ES</span>
        <svg width="7" height="4" viewBox="0 0 7 4" className="ml-[18px]" aria-hidden="true"><path d="M0 4h7L3.500 0z" fill="#e8eaec" /></svg>
        <svg width="15" height="15" viewBox="0 0 15 15" className="ml-[14px]" fill="#fff" aria-hidden="true">
          <path d="M.5 1H2v14H.5zM3 2h5.500v6H3zM9 4c2.500-1 3 1 5.500 0l-1.500 4.500C11 10 10 7.500 9 8z" />
        </svg>
        <svg width="15" height="12" viewBox="0 0 15 12" className="ml-[9px]" fill="#fff" aria-hidden="true">
          <path d="M0 10h2v1H0zM3 9h2v2H3zM6 6h2v5H6zM9 3h2v8H9z" />
          <path d="M12 0h2v11h-2z" opacity=".4" />
        </svg>
        <svg width="12" height="14" viewBox="0 0 12 14" className="ml-[12px]" fill="#fff" aria-hidden="true">
          <path d="M1 4h2v6H1zM4 4l4-4v14l-4-4z" />
        </svg>
        <time className="ml-4 w-[60px] text-center whitespace-nowrap">
          08:43 p.m.<br />03/05/2020
        </time>
        <button
          type="button"
          aria-label="Mostrar escritorio"
          className="ml-3 h-full w-[14px] border border-[#5d666e] bg-[linear-gradient(135deg,#5c646b,#1b2025_50%,#0d1115)]"
        />
      </div>
    </div>
  );
}

/* ---------- page ---------- */

export default function App() {
  return (
    <div className="flex h-screen min-h-[600px] flex-col overflow-hidden font-['Open_Sans','Noto_Sans',sans-serif]">
      <TitleBar />
      <TabRow />
      <Ribbon />
      <main className="flex min-h-0 flex-1 bg-[linear-gradient(#c4cede,#dce6f3)]">
        <div className="flex min-w-0 flex-1 items-start overflow-hidden pt-[5px] pr-[82px] pl-[5px]">
          <div className="relative h-[648px] min-w-0 flex-1 bg-white">
            <span className="absolute top-[162px] left-[200px] size-[3px] rounded-full bg-black" />
            <span className="absolute top-1/2 left-full z-10 size-[5px] -translate-y-1/2 border border-[#444] bg-white" />
            <QuoteDialog />
          </div>
          <div className="mt-[9px] h-[648px] w-2 shrink-0 bg-[linear-gradient(to_right,#a9b9d0,#c3d0e2)]" />
        </div>
        <ScrollBar />
      </main>
      <StatusBar />
      <Taskbar />
    </div>
  );
}
